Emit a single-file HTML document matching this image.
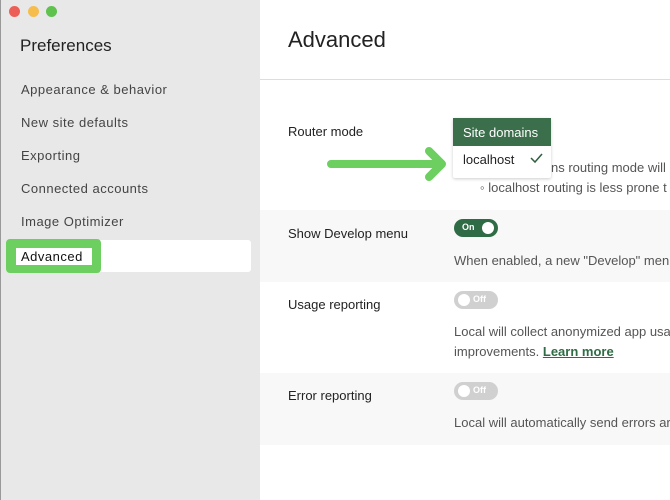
<!DOCTYPE html>
<html><head><style>
*{margin:0;padding:0;box-sizing:border-box}
body{width:670px;height:500px;overflow:hidden;position:relative;font-family:"Liberation Sans",sans-serif;background:#fff;color:#222}
.a{position:absolute;white-space:nowrap}
#side{position:absolute;left:0;top:0;width:260px;height:500px;background:#e8e8e8;border-left:1px solid #999}
.dot{position:absolute;top:6px;width:11px;height:11px;border-radius:50%}
.nav{position:absolute;left:20px;font-size:13px;color:#444;letter-spacing:0.5px;white-space:nowrap}
.lbl{position:absolute;left:288px;font-size:13px;color:#222;white-space:nowrap}
.desc{position:absolute;left:454px;font-size:13px;color:#555;white-space:nowrap}
.tog{position:absolute;left:454px;width:44px;height:18px;border-radius:9px;font-size:9px;font-weight:bold;color:#fff}
</style></head><body>
<div id="side">
<div class="dot" style="left:8px;background:#ec5f57"></div>
<div class="dot" style="left:27px;background:#f6bd4c"></div>
<div class="dot" style="left:45px;background:#5ec24c"></div>
<div class="a" style="left:19px;top:36px;font-size:17px;color:#222">Preferences</div>
<div class="nav" style="top:82px">Appearance &amp; behavior</div>
<div class="nav" style="top:115px">New site defaults</div>
<div class="nav" style="top:148px">Exporting</div>
<div class="nav" style="top:181px">Connected accounts</div>
<div class="nav" style="top:214px">Image Optimizer</div>
<div class="a" style="left:5px;top:240px;width:245px;height:32px;background:#fff;border-radius:3px"></div>
<div class="a" style="left:5px;top:239px;width:95px;height:34px;background:#6ccf5f;border-radius:4px"></div>
<div class="a" style="left:15px;top:248px;width:76px;height:17px;background:#fff"></div>
<div class="nav" style="top:249px;color:#111">Advanced</div>
</div>
<div class="a" style="left:288px;top:27px;font-size:22px;color:#222">Advanced</div>
<div class="a" style="left:260px;top:79px;width:410px;height:1px;background:#ddd"></div>
<div class="a" style="left:260px;top:210px;width:410px;height:72px;background:#f8f8f8"></div>
<div class="a" style="left:260px;top:373px;width:410px;height:72px;background:#f8f8f8"></div>
<div class="lbl" style="top:124px">Router mode</div>
<div class="desc" style="top:160px;left:551px">ns routing mode will</div>
<div class="desc" style="top:180px;left:480px">◦ localhost routing is less prone t</div>
<div class="a" style="left:453px;top:118px;width:98px;height:60px;background:#fff;box-shadow:0 1px 3px rgba(0,0,0,.2);border-radius:2px"></div>
<div class="a" style="left:453px;top:118px;width:98px;height:28px;background:#3b6f4b;color:#fff;font-size:13px;padding:7px 0 0 10px">Site domains</div>
<div class="a" style="left:463px;top:152px;font-size:13px;color:#222">localhost</div>
<svg class="a" style="left:529px;top:152px" width="14" height="12"><path d="M2 6l4 4 7-8" stroke="#2f5f3e" stroke-width="1.5" fill="none"/></svg>
<svg class="a" style="left:325px;top:145px" width="130" height="40"><path d="M6 19H116M104 6l13 13-13 13" stroke="#6ccf5f" stroke-width="8" fill="none" stroke-linecap="round" stroke-linejoin="round"/></svg>
<div class="lbl" style="top:226px">Show Develop menu</div>
<div class="tog" style="top:219px;background:#2f6b45"><span class="a" style="left:8px;top:3px">On</span><span class="a" style="left:28px;top:3px;width:12px;height:12px;border-radius:50%;background:#fff"></span></div>
<div class="desc" style="top:253px">When enabled, a new "Develop" menu</div>
<div class="lbl" style="top:297px">Usage reporting</div>
<div class="tog" style="top:291px;background:#d0d0d0"><span class="a" style="left:4px;top:3px;width:12px;height:12px;border-radius:50%;background:#fff"></span><span class="a" style="left:19px;top:3px">Off</span></div>
<div class="desc" style="top:324px">Local will collect anonymized app usa</div>
<div class="desc" style="top:344px">improvements. <b style="color:#2f6b45;text-decoration:underline">Learn more</b></div>
<div class="lbl" style="top:388px">Error reporting</div>
<div class="tog" style="top:382px;background:#d0d0d0"><span class="a" style="left:4px;top:3px;width:12px;height:12px;border-radius:50%;background:#fff"></span><span class="a" style="left:19px;top:3px">Off</span></div>
<div class="desc" style="top:415px">Local will automatically send errors ar</div>
</body></html>
